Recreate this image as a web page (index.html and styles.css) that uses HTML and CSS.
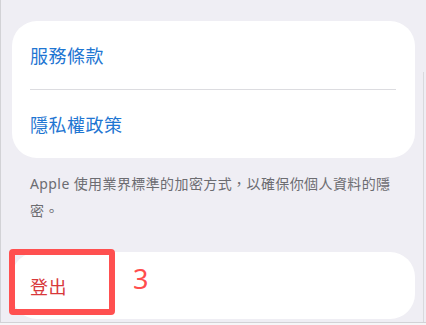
FILE: index.html
```html
<!DOCTYPE html>
<html lang="zh-Hant">
<head>
<meta charset="utf-8">
<link rel="stylesheet" href="styles.css">
</head>
<body>
<div class="screen">
  <div class="card">
    <div class="row link">服務條款</div>
    <div class="divider"></div>
    <div class="row link">隱私權政策</div>
  </div>
  <p class="note">Apple 使用業界標準的加密方式，以確保你個人資料的隱密。</p>
  <div class="card signout">
    <div class="row danger">登出</div>
    <div class="highlight"></div>
    <div class="step">3</div>
  </div>
</div>
</body>
</html>
```

FILE: styles.css
```css
html, body {
  margin: 0;
  padding: 0;
  background: #f6f6f8;
}
.screen {
  position: relative;
  box-sizing: border-box;
  width: 426px;
  height: 323px;
  padding: 21px 11px 0 11px;
  background: #efeef4;
  border-left: 1px solid #d2d2d6;
  border-bottom: 1px solid #d2d2d6;
  font-family: "Noto Sans", "Noto Sans CJK TC", sans-serif;
}
.screen::after {
  content: "";
  position: absolute;
  right: 2px;
  top: 72px;
  bottom: 0;
  width: 1px;
  background: #d9d9dd;
}
.card {
  position: relative;
  background: #ffffff;
  border-radius: 25px;
}
.row {
  height: 68px;
  display: flex;
  align-items: center;
  padding-left: 18px;
  font-size: 18px;
  letter-spacing: 0.5px;
}
.link {
  color: #1f76d2;
}
.divider {
  height: 1px;
  margin: 0 19px 0 18px;
  background: #dcdce0;
}
.note {
  margin: 0;
  padding: 12px 18px 0 18px;
  font-size: 14px;
  line-height: 27px;
  letter-spacing: 0.4px;
  color: #6c6c71;
}
.signout {
  margin-top: 28px;
}
.signout .row {
  height: 67px;
}
.danger {
  color: #d8383a;
}
.highlight {
  position: absolute;
  left: -3px;
  top: -3px;
  width: 106px;
  height: 66px;
  box-sizing: border-box;
  border: 6px solid #ff5050;
  border-radius: 4px;
}
.step {
  position: absolute;
  left: 121px;
  top: 13px;
  font-family: "Noto Sans", sans-serif;
  font-size: 27px;
  line-height: 1;
  color: #ff4d4d;
}
```
